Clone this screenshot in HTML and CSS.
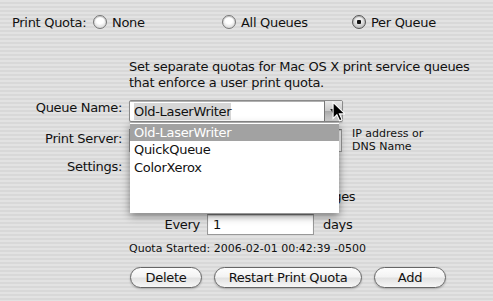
FILE: index.html
```html
<!DOCTYPE html>
<html lang="en">

<head>
  <meta charset="UTF-8" />
  <title>Print Quota</title>
  <link rel="stylesheet" href="styles.css">
</head>

<body>
  <div class="panel">
    <!-- Quota mode -->
    <div class="quota-row">
      <span class="quota-label">Print Quota:</span>
      <div class="radio-matrix">
        <label class="radio"><span class="radio-dot"></span>None</label>
        <label class="radio"><span class="radio-dot"></span>All Queues</label>
        <label class="radio"><span class="radio-dot on"></span>Per Queue</label>
      </div>
    </div>

    <p class="desc">Set separate quotas for Mac OS X print service queues<br>that enforce a user print quota.</p>

    <!-- Queue settings -->
    <div class="form-grid">
      <span class="field-label row-queue">Queue Name:</span>
      <div class="combo row-queue">
        <div class="combo-field"><span class="sel">Old-LaserWriter</span></div>
        <div class="combo-btn">
          <svg viewBox="0 0 8 6" class="combo-arrow"><path d="M0 0h8L4 6z" fill="#222"></path></svg>
        </div>
        <svg class="cursor" viewBox="0 0 12 19">
          <path d="M1 1v15l3.5-3.5 2.5 5.5 2.2-1-2.4-5.3H12z" fill="#000" stroke="#fff" stroke-width="1"></path>
        </svg>
        <ul class="menu">
          <li class="hl">Old-LaserWriter</li>
          <li>QuickQueue</li>
          <li>ColorXerox</li>
        </ul>
      </div>

      <span class="field-label row-server">Print Server:</span>
      <div class="row-server server-cell">
        <div class="text-field server-field"></div>
        <span class="hint">IP address or<br>DNS Name</span>
      </div>

      <span class="field-label row-settings">Settings:</span>
      <div class="row-settings"></div>

      <span class="row-limit"></span>
      <div class="row-limit limit-cell">
        <span class="radio-dot"></span>
        <span class="limit-text">Limit to 100 pages</span>
      </div>

      <span class="row-every"></span>
      <div class="row-every every">
        <span class="every-label">Every</span>
        <div class="text-field every-field">1</div>
        <span>days</span>
      </div>

      <span class="row-started"></span>
      <div class="row-started started">Quota Started: 2006-02-01 00:42:39 -0500</div>

      <span class="row-buttons"></span>
      <div class="row-buttons buttons">
        <button class="pill small">Delete</button>
        <button class="pill wide">Restart Print Quota</button>
        <button class="pill small">Add</button>
      </div>
    </div>
  </div>
</body>

</html>
```

FILE: styles.css
```css
/* General */
body {
  margin: 0;
  width: 493px;
  height: 301px;
  overflow: hidden;
  font-family: 'DejaVu Sans', sans-serif;
  font-size: 13px;
  letter-spacing: -0.3px;
  color: #111;
  background: repeating-linear-gradient(#e2e2e2 0 2px, #d8d8d8 2px 4px);
}

.panel {
  padding-top: 12px;
}

/* Print Quota radios */
.quota-row {
  display: flex;
  align-items: center;
  height: 20px;
  padding-left: 12px;
}

.quota-label {
  width: 81px;
}

.radio-matrix {
  display: grid;
  grid-template-columns: 129px 130px 130px;
}

.radio {
  display: flex;
  align-items: center;
  gap: 5px;
}

.radio-dot {
  width: 12px;
  height: 12px;
  border: 1px solid #777;
  border-radius: 50%;
  background: radial-gradient(circle at 50% 35%, #fff 0 35%, #dcdcdc 75%, #bbb 100%);
  box-shadow: inset 0 1px 1px rgba(0, 0, 0, 0.25);
  flex: none;
}

.radio-dot.on {
  background: radial-gradient(circle, #111 0 2px, transparent 2.5px),
    radial-gradient(circle at 50% 35%, #eee 0 30%, #b8b8b8 80%, #999 100%);
  border-color: #555;
}

/* Description */
.desc {
  margin: 27px 0 0 129px;
  line-height: 16px;
}

/* Form grid */
.form-grid {
  display: grid;
  grid-template-columns: 122px 1fr;
  column-gap: 7px;
  margin-top: 9px;
}

.field-label {
  text-align: right;
  align-self: center;
}

.row-queue {
  grid-row: 1;
  height: 22px;
}

.row-server {
  grid-row: 2;
  margin-top: 7px;
  height: 23px;
}

.row-settings {
  grid-row: 3;
  margin-top: 7px;
  height: 22px;
}

.row-limit {
  grid-row: 4;
  margin-top: 4px;
  height: 22px;
}

.row-every {
  grid-row: 5;
  margin-top: 7px;
  height: 21px;
}

.row-started {
  grid-row: 6;
  margin-top: 6px;
  height: 16px;
}

.row-buttons {
  grid-row: 7;
  margin-top: 10px;
  height: 21px;
}

.field-label.row-server {
  transform: translateY(2px);
}

/* Combo box */
.combo {
  position: relative;
  display: flex;
  width: 214px;
  box-sizing: border-box;
  border: 1px solid #8a8a8a;
  border-radius: 2px;
  background: #fff;
  box-shadow: 0 1px 1px rgba(0, 0, 0, 0.15);
}

.combo-field {
  flex: 1;
  display: flex;
  align-items: center;
  padding-left: 4px;
  border-top: 1px solid #b0b0b0;
}

.sel {
  background: #d6d6d6;
  line-height: 17px;
}

.combo-btn {
  width: 17px;
  display: flex;
  align-items: center;
  justify-content: center;
  border-left: 1px solid #777;
  background: linear-gradient(#e8e8e8, #c9c9c9 50%, #a8a8a8 51%, #d0d0d0);
}

.combo-arrow {
  width: 7px;
  height: 5px;
}

.cursor {
  position: absolute;
  left: 202px;
  top: 0;
  width: 13px;
  height: 21px;
  z-index: 3;
}

.menu {
  position: absolute;
  left: 0;
  top: 22px;
  width: 209px;
  height: 89px;
  margin: 0;
  padding: 1px 0 0;
  list-style: none;
  background: #fff;
  box-shadow: 0 3px 8px rgba(0, 0, 0, 0.45);
  z-index: 2;
}

.menu li {
  height: 18px;
  line-height: 18px;
  padding-left: 4px;
}

.menu li.hl {
  background: #a2a2a2;
  color: #fff;
  height: 17px;
  line-height: 17px;
}

/* Text fields */
.text-field {
  box-sizing: border-box;
  background: #fff;
  border: 1px solid #999;
  border-top-color: #777;
  box-shadow: inset 0 1px 1px rgba(0, 0, 0, 0.2);
}

.server-cell {
  display: flex;
  align-items: flex-start;
  gap: 10px;
}

.server-field {
  width: 213px;
  height: 23px;
}

.hint {
  font-size: 11px;
  letter-spacing: 0;
  line-height: 13px;
  margin-top: -2px;
}

.limit-cell {
  display: flex;
  align-items: center;
  gap: 95px;
  margin-left: 1px;
}

.every {
  display: flex;
  align-items: center;
}

.every-label {
  width: 71px;
  text-align: right;
  margin-right: 7px;
}

.every-field {
  width: 107px;
  height: 21px;
  line-height: 19px;
  padding-left: 5px;
  margin-right: 9px;
}

.started {
  font-size: 11px;
  letter-spacing: 0;
  line-height: 16px;
}

/* Aqua buttons */
.buttons {
  display: flex;
  gap: 12px;
  margin-left: 1px;
}

.pill {
  height: 21px;
  padding: 0;
  font-family: 'DejaVu Sans', sans-serif;
  font-size: 13px;
  letter-spacing: -0.3px;
  color: #111;
  border: 1px solid #666;
  border-radius: 11px;
  background: linear-gradient(#fdfdfd, #f3f3f3 45%, #e2e2e2 55%, #f7f7f7);
  box-shadow: 0 1px 2px rgba(0, 0, 0, 0.25);
}

.pill.small {
  width: 72px;
}

.pill.wide {
  width: 148px;
}
```
